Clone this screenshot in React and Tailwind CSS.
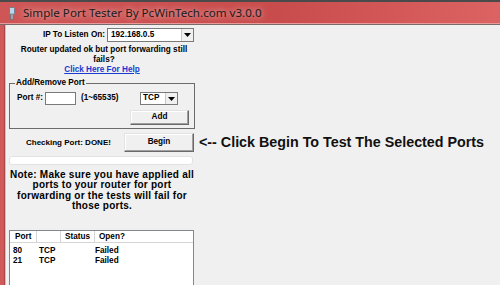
// Fenêtre "Simple Port Tester" — reproduction statique, style Windows 7
const ui = { fontFamily: '"Liberation Sans", Arial, sans-serif' }

function DropArrow() {
  return (
    <span className="flex h-full w-[12px] items-center justify-center border-l border-[#c8c8c8] bg-[#f0f0f0]">
      <svg width="7" height="4" viewBox="0 0 7 4">
        <path d="M0 0h7L3.5 4z" fill="#000" />
      </svg>
    </span>
  )
}

function Button({ children, className }) {
  return (
    <div
      className={`flex items-center justify-center border border-t-[#e3e3e3] border-l-[#e3e3e3] border-r-[#696969] border-b-[#696969] bg-[#f0f0f0] shadow-[inset_-1px_-1px_0_#a0a0a0,inset_1px_1px_0_#fff] text-[8.2px] font-bold ${className}`}
    >
      {children}
    </div>
  )
}

export default function App() {
  return (
    <div className="w-[500px] h-[285px] overflow-hidden bg-[#4a4a4a] pt-[2px] text-black" style={ui}>
      {/* Barre de titre */}
      <div className="flex h-[21px] items-center bg-[linear-gradient(90deg,#cf5656_0%,#c94c4c_55%,#d45858_80%,#dc6363_100%)] pl-[9px]">
        <svg width="6" height="13" viewBox="0 0 6 13" className="mt-[1px]">
          <rect x="0.5" y="0.5" width="5" height="7" rx="1" fill="#bfd6ea" stroke="#6d7f90" />
          <rect x="1.5" y="7" width="3" height="5.5" fill="#9aa4ad" stroke="#5f6a74" strokeWidth="0.6" />
        </svg>
        <span
          className="ml-[8px] mt-[1px] text-[11.6px] text-[#1c1c1c] [text-shadow:0_0_6px_rgba(255,235,235,0.9)]"
          style={{ fontFamily: '"Segoe UI", "Noto Sans", sans-serif' }}
        >
          Simple Port Tester By PcWinTech.com v3.0.0
        </span>
      </div>
      <div className="h-[1px] bg-[#e99a9a]" />
      <div className="h-[1px] bg-[#7a6a6a]" />

      <div className="flex h-[260px]">
        {/* Bord gauche de la fenêtre */}
        <div className="w-[4px] bg-[#d05a5a]" />
        <div className="w-[1px] bg-[#a84848]" />
        <div className="w-[1px] bg-[#eab4b4]" />

        <div className="flex-1 bg-[#f0f0f0] pl-[3px]">
          <div className="flex w-[186px] flex-col">
            {/* IP */}
            <div className="mt-[3px] flex h-[14px] items-center justify-end pr-[1px]">
              <span className="text-[8.2px] font-bold">IP To Listen On:</span>
              <div className="ml-[2px] flex h-full w-[87px] items-center border border-[#7a7a7a] bg-white pl-[3px]">
                <span className="flex-1 text-[8.2px] font-bold">192.168.0.5</span>
                <DropArrow />
              </div>
            </div>

            <p className="mt-[3px] pl-[4px] text-center text-[8.2px] font-bold leading-[10px]">
              Router updated ok but port forwarding still
              <br />
              fails?
            </p>
            <a className="text-center text-[8.2px] font-bold leading-[10px] text-[#1a3ad0] underline">
              Click Here For Help
            </a>

            {/* Ajout / retrait de port */}
            <fieldset className="mt-[3px] border border-[#6b6b6b] pb-[3px]">
              <legend className="ml-[5px] px-[1px] text-[8.2px] font-bold leading-[10px]">Add/Remove Port</legend>
              <div className="mt-[4px] flex h-[13px] items-center pl-[7px] pr-[16px]">
                <span className="text-[8.2px] font-bold">Port #:</span>
                <div className="ml-[2px] h-full w-[31px] border border-[#7a7a7a] bg-white" />
                <span className="ml-[5px] text-[8.2px] font-bold">(1~65535)</span>
                <div className="ml-auto flex h-full w-[38px] items-center border border-[#7a7a7a] bg-white pl-[2px]">
                  <span className="flex-1 text-[8.2px] font-bold">TCP</span>
                  <DropArrow />
                </div>
              </div>
              <div className="mt-[5px] flex justify-end pr-[5px]">
                <Button className="h-[15px] w-[59px]">Add</Button>
              </div>
            </fieldset>

            {/* Lancement du test */}
            <div className="mt-[4px] flex h-[19px] w-max items-center">
              <div className="flex w-[185px] items-center pl-[17px]">
                <span className="text-[8px] font-bold">Checking Port: DONE!</span>
                <Button className="ml-auto h-[19px] w-[70px]">Begin</Button>
              </div>
              <span className="ml-[5px] whitespace-nowrap text-[14.3px] font-bold text-[#111]">
                &lt;-- Click Begin To Test The Selected Ports
              </span>
            </div>

            <div className="mt-[4px] h-[9px] w-[184px] rounded-[3px] border border-[#e2e2e2] bg-white" />

            <p className="mt-[5px] whitespace-nowrap text-center text-[10px] font-bold leading-[10.3px] tracking-[0.25px]">
              Note: Make sure you have applied all
              <br />
              ports to your router for port
              <br />
              forwarding or the tests will fail for
              <br />
              those ports.
            </p>

            {/* Liste des ports */}
            <div className="mt-[19px] h-[60px] w-[185px] border border-[#828790] bg-white">
              <div className="flex h-[12px] border-b border-[#d5d5d5] text-[8.2px] font-bold leading-[12px]">
                <span className="w-[27px] border-r border-[#d5d5d5] pl-[5px]">Port</span>
                <span className="w-[24px] border-r border-[#d5d5d5]" />
                <span className="w-[34px] border-r border-[#d5d5d5] pl-[4px]">Status</span>
                <span className="flex-1 pl-[4px]">Open?</span>
              </div>
              <div className="pt-[3px] text-[8.2px] font-bold leading-[10px]">
                {[['80', 'TCP', 'Failed'], ['21', 'TCP', 'Failed']].map(([port, proto, open]) => (
                  <div key={port} className="flex">
                    <span className="w-[29px] pl-[3px]">{port}</span>
                    <span className="w-[56px]">{proto}</span>
                    <span>{open}</span>
                  </div>
                ))}
              </div>
            </div>
          </div>
        </div>
      </div>
    </div>
  )
}
